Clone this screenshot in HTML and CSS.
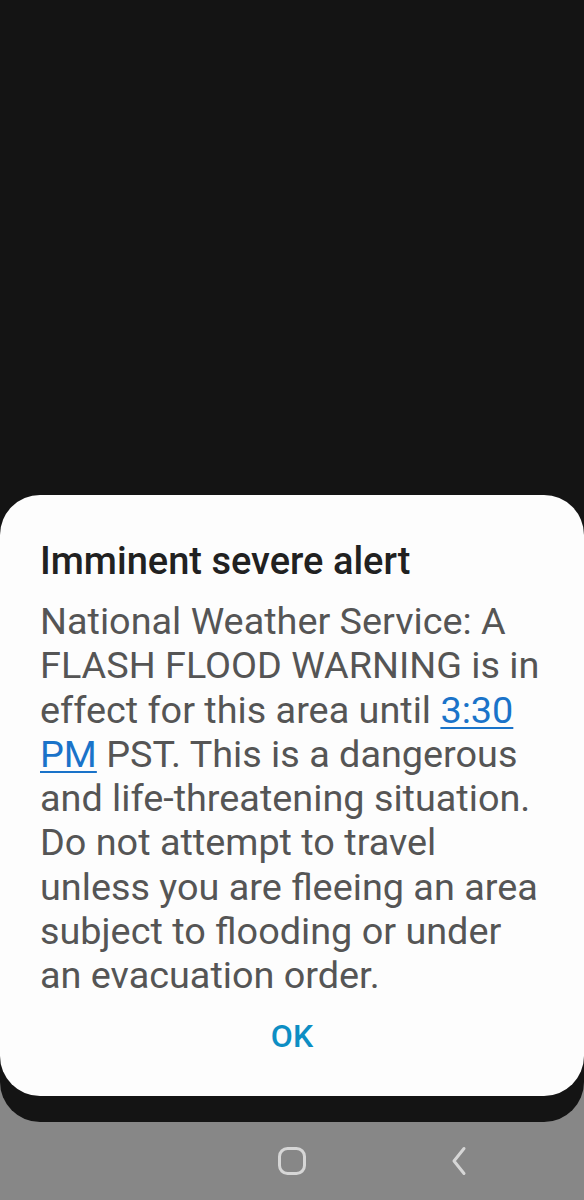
FILE: index.html
```html
<!DOCTYPE html>
<html lang="en">
<head>
  <meta charset="UTF-8" />
  <meta name="viewport" content="width=device-width, initial-scale=1.0"/>
  <title>Imminent severe alert</title>
  <link rel="stylesheet" href="styles.css">
</head>
<body>
<div class="screen">
  <div class="dialog">
    <h2 class="dialog-title">Imminent severe alert</h2>
    <p class="dialog-text">National Weather Service: A FLASH FLOOD WARNING is in effect for this area until <a href="#">3:30 PM</a> PST. This is a dangerous and life-threatening situation. Do not attempt to travel unless you are fleeing an area subject to flooding or under an evacuation order.</p>
    <button class="ok-btn">OK</button>
  </div>
</div>

<div class="nav-bar">
  <span class="nav-slot"></span>
  <span class="nav-slot">
    <svg width="30" height="30" viewBox="0 0 30 30">
      <rect x="2.5" y="2.5" width="25" height="25" rx="8" fill="none" stroke="#d6d6d6" stroke-width="3"/>
    </svg>
  </span>
  <span class="nav-slot">
    <svg width="30" height="30" viewBox="0 0 30 30">
      <polyline points="19,2.5 9,15 19,27.5" fill="none" stroke="#d6d6d6" stroke-width="3" stroke-linecap="round" stroke-linejoin="round"/>
    </svg>
  </span>
</div>
</body>
</html>
```

FILE: styles.css
```css
html, body {
  margin: 0;
  height: 1200px;
  background-color: #878787;
  font-family: Roboto, "Noto Sans", sans-serif;
  overflow: hidden;
}

.screen {
  height: 1122px;
  background-color: #141414;
  border-radius: 0 0 40px 40px;
  display: flex;
  flex-direction: column;
  justify-content: flex-end;
  padding-bottom: 26px;
  box-sizing: border-box;
}

.dialog {
  height: 601px;
  background-color: #fdfdfd;
  border-radius: 40px;
  padding: 41px 40px 0 40px;
  box-sizing: border-box;
}

.dialog-title {
  margin: 0 0 13px 0;
  font-size: 38px;
  font-weight: 500;
  line-height: 50px;
  color: #212121;
}

.dialog-text {
  margin: 0;
  font-size: 37.8px;
  line-height: 44.25px;
  color: #555555;
}

.dialog-text a {
  color: #1a73c9;
  text-decoration: underline;
  text-decoration-thickness: 2px;
  text-underline-offset: 4px;
}

.ok-btn {
  display: block;
  margin: 17px auto 0 auto;
  padding: 0 20px;
  height: 44px;
  font-family: inherit;
  font-size: 32px;
  font-weight: 500;
  color: #0d8ec4;
  background: none;
  border: none;
}

.nav-bar {
  height: 78px;
  display: flex;
  justify-content: center;
  align-items: center;
}

.nav-slot {
  width: 168px;
  display: flex;
  justify-content: center;
}
```
